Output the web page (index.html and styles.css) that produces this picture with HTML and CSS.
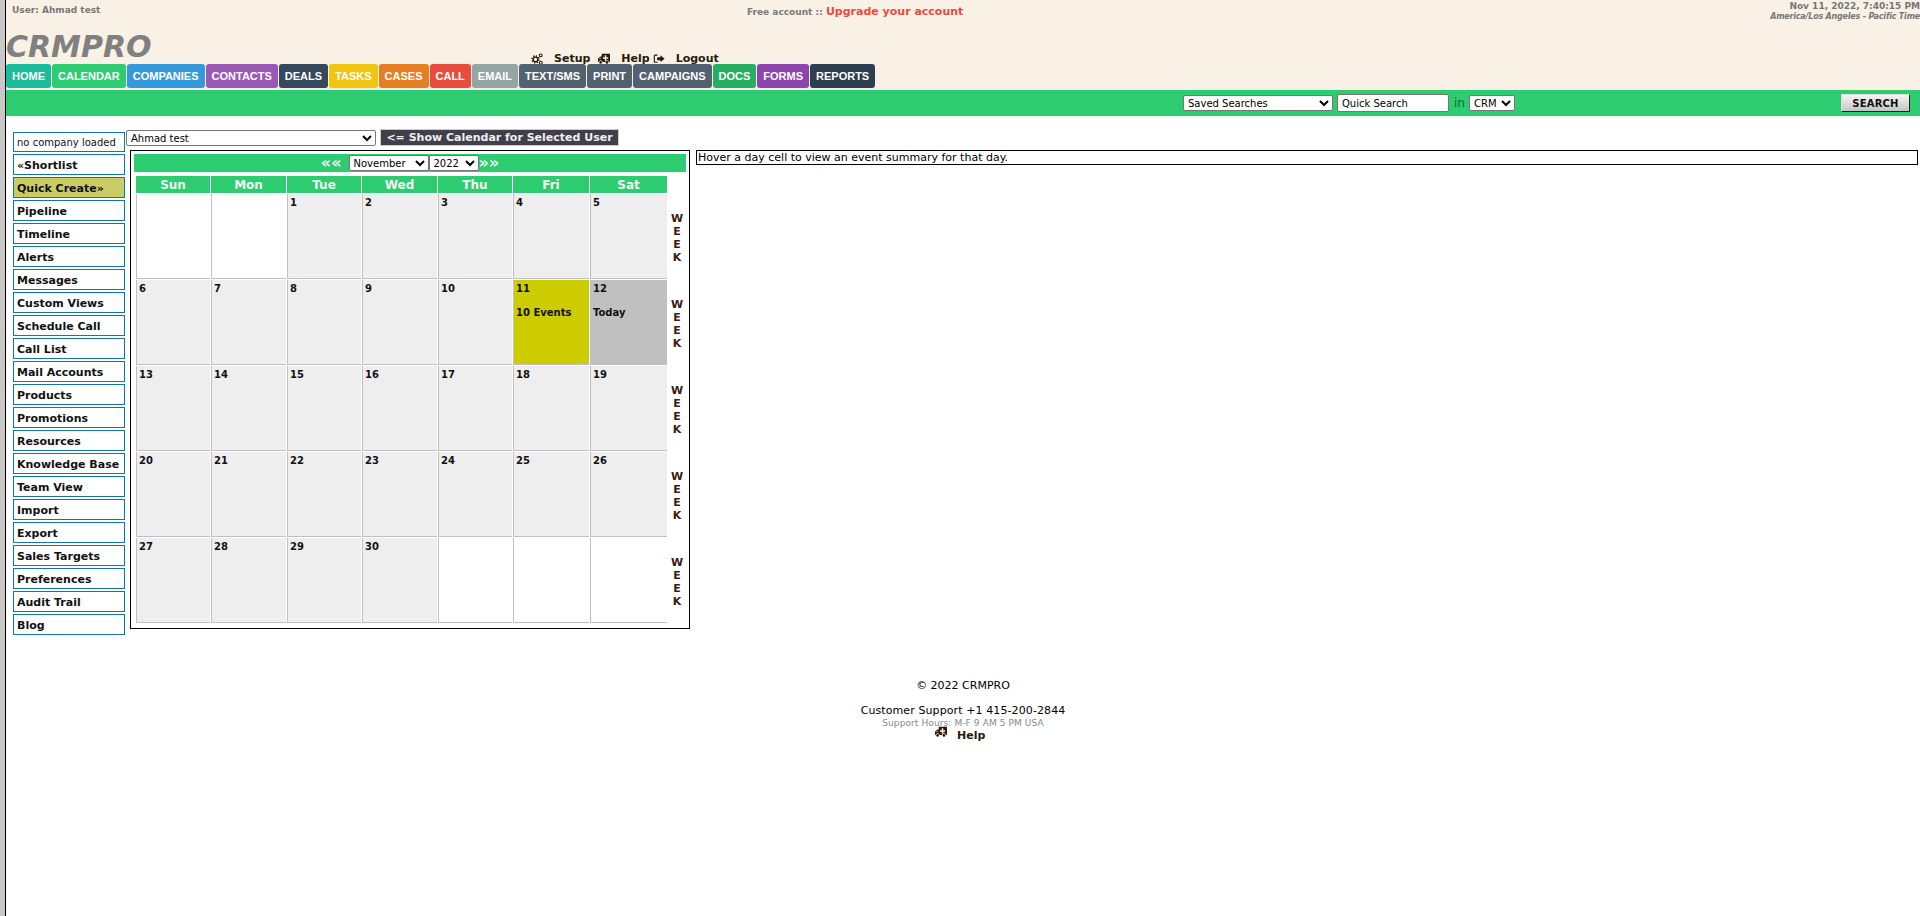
FILE: index.html
```html
<!DOCTYPE html>
<html>
<head>
    <title>CRMPRO</title>
    <link rel="stylesheet" href="styles.css">
</head>
<body>
    <div class="page">
        <!-- Top header -->
        <div class="header">
            <div class="header-top">
                <div class="user-name">User: Ahmad test</div>
                <div class="account">Free account :: <a class="upgrade">Upgrade your account</a></div>
                <div class="clock">
                    <div class="clock-time">Nov 11, 2022, 7:40:15 PM</div>
                    <div class="clock-zone">America/Los Angeles - Pacific Time</div>
                </div>
            </div>
            <div class="logo-row">
                <div class="logo">CRMPRO</div>
                <div class="top-links">
                    <svg class="icon" viewBox="0 0 16 16">
                        <g fill="none" stroke="#2b1a0a">
                            <circle cx="6" cy="8.500" r="4.600" stroke-width="2" stroke-dasharray="1.800 1.810"/>
                            <circle cx="6" cy="8.500" r="3" stroke-width="1.600"/>
                            <circle cx="13" cy="3.200" r="1.900" stroke-width="1.400"/>
                            <circle cx="13" cy="13" r="1.900" stroke-width="1.400"/>
                        </g>
                    </svg>
                    <a class="top-link setup-link">Setup</a>
                    <svg class="icon" viewBox="0 0 16 16"><path d="M5 1h11v11h-1.500a2.500 2.500 0 0 0-5 0H6a2.500 2.500 0 0 0-5 0H0V7.500L3 4.500h2zM9 3v2.500H6.500v2H9V10h2V7.500h2.500v-2H11V3zM3.500 6 1.500 8h2z" fill-rule="evenodd"/><circle cx="3.500" cy="12.500" r="1.800"/><circle cx="12" cy="12.500" r="1.800"/></svg>
                    <a class="top-link help-link">Help</a>
                    <svg class="icon" viewBox="0 0 16 16"><path d="M6 2H2.500A1.500 1.500 0 0 0 1 3.500v8A1.500 1.500 0 0 0 2.500 13H6v-1.500H2.500v-8H6zM10 3l5.500 4.500L10 12V9.500H5.500v-4H10z"/></svg>
                    <a class="top-link">Logout</a>
                </div>
            </div>
            <div class="nav">
                <a class="nav-item home">HOME</a>
                <a class="nav-item calendar">CALENDAR</a>
                <a class="nav-item companies">COMPANIES</a>
                <a class="nav-item contacts">CONTACTS</a>
                <a class="nav-item deals">DEALS</a>
                <a class="nav-item tasks">TASKS</a>
                <a class="nav-item cases">CASES</a>
                <a class="nav-item call">CALL</a>
                <a class="nav-item email">EMAIL</a>
                <a class="nav-item slate">TEXT/SMS</a>
                <a class="nav-item slate">PRINT</a>
                <a class="nav-item slate">CAMPAIGNS</a>
                <a class="nav-item docs">DOCS</a>
                <a class="nav-item forms">FORMS</a>
                <a class="nav-item reports">REPORTS</a>
            </div>
        </div>

        <!-- Search bar -->
        <div class="search-bar">
            <select class="saved-searches"><option>Saved Searches</option></select>
            <input class="quick-search" type="text" value="Quick Search">
            <span class="search-in">in</span>
            <select class="search-scope"><option>CRM</option></select>
            <button class="search-button">SEARCH</button>
        </div>

        <div class="content">
            <!-- Left menu -->
            <div class="sidebar">
                <div class="side-item no-company">no company loaded</div>
                <a class="side-item">«Shortlist</a>
                <a class="side-item quick-create">Quick Create»</a>
                <a class="side-item">Pipeline</a>
                <a class="side-item">Timeline</a>
                <a class="side-item">Alerts</a>
                <a class="side-item">Messages</a>
                <a class="side-item">Custom Views</a>
                <a class="side-item">Schedule Call</a>
                <a class="side-item">Call List</a>
                <a class="side-item">Mail Accounts</a>
                <a class="side-item">Products</a>
                <a class="side-item">Promotions</a>
                <a class="side-item">Resources</a>
                <a class="side-item">Knowledge Base</a>
                <a class="side-item">Team View</a>
                <a class="side-item">Import</a>
                <a class="side-item">Export</a>
                <a class="side-item">Sales Targets</a>
                <a class="side-item">Preferences</a>
                <a class="side-item">Audit Trail</a>
                <a class="side-item">Blog</a>
            </div>

            <div class="main">
                <div class="user-row">
                    <select class="user-select"><option>Ahmad test</option></select>
                    <button class="show-calendar">&lt;= Show Calendar for Selected User</button>
                </div>
                <div class="calendar-row">
                    <div class="calendar-box">
                        <div class="month-bar">
                            <span class="month-arrow prev">««</span>
                            <select class="month-select"><option>November</option></select>
                            <select class="year-select"><option>2022</option></select>
                            <span class="month-arrow">»»</span>
                        </div>
                        <table class="cal">
                            <tr>
                                <th>Sun</th><th>Mon</th><th>Tue</th><th>Wed</th><th>Thu</th><th>Fri</th><th>Sat</th>
                                <td class="week-head"></td>
                            </tr>
                            <tr>
                                <td class="blank"></td>
                                <td class="blank"></td>
                                <td>1</td><td>2</td><td>3</td><td>4</td><td>5</td>
                                <td class="week">W<br>E<br>E<br>K</td>
                            </tr>
                            <tr>
                                <td>6</td><td>7</td><td>8</td><td>9</td><td>10</td>
                                <td class="events">11<div class="cell-note">10 Events</div></td>
                                <td class="today">12<div class="cell-note">Today</div></td>
                                <td class="week">W<br>E<br>E<br>K</td>
                            </tr>
                            <tr>
                                <td>13</td><td>14</td><td>15</td><td>16</td><td>17</td><td>18</td><td>19</td>
                                <td class="week">W<br>E<br>E<br>K</td>
                            </tr>
                            <tr>
                                <td>20</td><td>21</td><td>22</td><td>23</td><td>24</td><td>25</td><td>26</td>
                                <td class="week">W<br>E<br>E<br>K</td>
                            </tr>
                            <tr>
                                <td>27</td><td>28</td><td>29</td><td>30</td>
                                <td class="blank"></td>
                                <td class="blank"></td>
                                <td class="blank"></td>
                                <td class="week">W<br>E<br>E<br>K</td>
                            </tr>
                        </table>
                    </div>
                    <div class="summary">Hover a day cell to view an event summary for that day.</div>
                </div>
            </div>
        </div>

        <!-- Footer -->
        <div class="footer">
            <div class="copyright">© 2022 CRMPRO</div>
            <div class="support">Customer Support +1 415-200-2844</div>
            <div class="hours">Support Hours: M-F 9 AM 5 PM USA</div>
            <div class="footer-help">
                <svg class="icon" viewBox="0 0 16 16"><path d="M5 1h11v11h-1.500a2.500 2.500 0 0 0-5 0H6a2.500 2.500 0 0 0-5 0H0V7.500L3 4.500h2zM9 3v2.500H6.500v2H9V10h2V7.500h2.500v-2H11V3zM3.500 6 1.500 8h2z" fill-rule="evenodd"/><circle cx="3.500" cy="12.500" r="1.800"/><circle cx="12" cy="12.500" r="1.800"/></svg>
                <a class="top-link">Help</a>
            </div>
        </div>
    </div>
</body>
</html>
```

FILE: styles.css
```css
/* Page frame: grey strip and black line down the left side */
html, body {
    margin: 0;
    height: 100%;
}
body {
    background-color: #c8c8c8;
    padding-left: 5px;
    font-family: "DejaVu Sans", Verdana, sans-serif;
    font-size: 11px;
    color: #000;
    overflow: hidden;
}
.page {
    background-color: #fff;
    border-left: 1px solid #000;
    height: 100%;
}

/* Header */
.header {
    background-color: #f9f1e6;
    height: 90px;
    display: flex;
    flex-direction: column;
}
.header-top {
    display: flex;
    height: 31px;
}
.user-name {
    width: 741px;
    box-sizing: border-box;
    padding: 5px 0 0 6px;
    font-size: 9px;
    font-weight: bold;
    color: #777;
}
.account {
    padding-top: 5px;
    font-size: 9px;
    font-weight: bold;
    color: #777;
}
.upgrade {
    font-size: 11px;
    color: #e74c3c;
}
.clock {
    margin-left: auto;
    padding-top: 1px;
    text-align: right;
    color: #777;
    font-weight: bold;
}
.clock-time {
    font-size: 9px;
}
.clock-zone {
    margin-top: 1px;
    font-size: 8px;
    font-style: italic;
    letter-spacing: -0.2px;
}
.logo-row {
    display: flex;
    height: 33px;
}
.logo {
    width: 525px;
    padding-top: 1px;
    font-size: 30px;
    font-weight: bold;
    font-style: italic;
    line-height: 30px;
    color: #808080;
}
.top-links {
    display: flex;
    align-items: flex-end;
    height: 35px;
}
.top-link {
    font-weight: bold;
    color: #2b1a0a;
    margin: 0 9px 0 11px;
    line-height: 14px;
}
.top-links .setup-link {
    margin-right: 8px;
}
.top-links .help-link {
    margin-right: 3px;
}
.icon {
    width: 12px;
    height: 12px;
    fill: #2b1a0a;
    margin-bottom: 1px;
}

/* Coloured tabs */
.nav {
    display: flex;
    gap: 1px;
}
.nav-item {
    height: 24px;
    line-height: 24px;
    padding: 0 6px;
    border-radius: 3px;
    font-family: "Liberation Sans", Arial, sans-serif;
    font-size: 11px;
    font-weight: bold;
    color: #fff;
}
.home { background-color: #1abc9c; }
.calendar { background-color: #2ecc71; }
.companies { background-color: #3498db; }
.contacts { background-color: #9b59b6; }
.deals { background-color: #34495e; }
.tasks { background-color: #f1c40f; }
.cases { background-color: #e67e22; }
.call { background-color: #e74c3c; }
.email { background-color: #95a5a6; }
.slate { background-color: #536270; }
.docs { background-color: #27ae60; }
.forms { background-color: #8e44ad; }
.reports { background-color: #2c3e50; }

/* Search bar */
.search-bar {
    background-color: #2ecc71;
    height: 26px;
    display: flex;
    align-items: center;
    padding-left: 1177px;
}
.search-bar select, .search-bar input {
    font-family: "DejaVu Sans", Verdana, sans-serif;
    font-size: 10px;
    box-sizing: border-box;
    background-color: #fff;
    border: 1px solid #767676;
    border-radius: 2px;
    height: 16px;
    padding: 0;
}
.saved-searches {
    width: 150px;
}
.search-bar .quick-search {
    width: 112px;
    height: 18px;
    margin-left: 4px;
    padding-left: 4px;
}
.search-in {
    margin: 0 4px 0 5px;
    font-size: 12px;
    color: #14642f;
}
.search-scope {
    width: 46px;
}
.search-button {
    width: 69px;
    height: 18px;
    margin-left: auto;
    margin-right: 10px;
    padding: 0;
    border: 1px solid #ddd;
    border-right-color: #222;
    border-bottom-color: #222;
    background: linear-gradient(#f5f5f5, #c4c4c4);
    font-family: "DejaVu Sans", Verdana, sans-serif;
    font-size: 10px;
    font-weight: bold;
    letter-spacing: 0.2px;
    color: #111;
}

/* Main area */
.content {
    display: flex;
    padding: 13px 0 0 7px;
}
.sidebar {
    width: 112px;
    display: flex;
    flex-direction: column;
    gap: 2px;
    padding-top: 3px;
}
.side-item {
    height: 21px;
    line-height: 19px;
    box-sizing: border-box;
    border: 1px solid #0e76a8;
    padding: 1px 0 0 3px;
    font-weight: bold;
    color: #111;
    white-space: nowrap;
}
.no-company {
    height: 20px;
    padding-top: 0;
    font-weight: normal;
    font-size: 10px;
}
.quick-create {
    background-color: #cccc66;
}
.main {
    flex: 1;
    padding-left: 1px;
    min-width: 0;
}
.user-row {
    display: flex;
    align-items: flex-end;
    height: 17px;
}
.user-select {
    width: 250px;
    height: 16px;
    box-sizing: border-box;
    padding: 0;
    font-family: "DejaVu Sans", Verdana, sans-serif;
    font-size: 10px;
    background-color: #fff;
    border: 1px solid #767676;
    border-radius: 2px;
}
.show-calendar {
    height: 17px;
    width: 239px;
    margin-left: 4px;
    padding: 0;
    border: 1px solid #ccc;
    background-color: #423f4d;
    color: #eee;
    font-family: "DejaVu Sans", Verdana, sans-serif;
    font-size: 11px;
    font-weight: bold;
    white-space: nowrap;
}
.calendar-row {
    display: flex;
    gap: 6px;
    margin-top: 4px;
    padding-left: 4px;
}

/* Calendar */
.calendar-box {
    width: 560px;
    height: 479px;
    box-sizing: border-box;
    border: 1px solid #000;
    padding: 3px;
    flex-shrink: 0;
}
.month-bar {
    background-color: #2ecc71;
    height: 18px;
    display: flex;
    align-items: center;
    justify-content: center;
    color: #eee;
    font-weight: bold;
}
.month-arrow {
    font-size: 16px;
    line-height: 16px;
}
.month-arrow.prev {
    margin-right: 7px;
}
.month-bar select {
    height: 16px;
    box-sizing: border-box;
    padding: 0;
    font-family: "DejaVu Sans", Verdana, sans-serif;
    font-size: 10px;
    background-color: #fff;
    border: 1px solid #767676;
    border-radius: 2px;
}
.month-select {
    width: 80px;
}
.year-select {
    width: 50px;
}
.cal {
    border-collapse: separate;
    border-spacing: 1px;
    table-layout: fixed;
    width: 552px;
    margin: 3px 0 0 1px;
}
.cal th {
    background-color: #2ecc71;
    color: #f4f4f4;
    height: 17px;
    padding: 0;
    font-size: 12px;
}
.cal th:nth-child(1), .cal th:nth-child(3), .cal th:nth-child(5) {
    width: 74px;
}
.cal th:nth-child(2), .cal th:nth-child(4) {
    width: 75px;
}
.cal th:nth-child(6) {
    width: 76px;
}
.cal th:nth-child(7) {
    width: 77px;
}
.cal td {
    height: 79px;
    padding: 3px 2px 2px 2px;
    vertical-align: top;
    background-color: #eee;
    border-left: 1px solid #c0c0c0;
    border-bottom: 1px solid #c0c0c0;
    font-weight: bold;
    font-size: 10px;
    color: #111;
}
.cal td.blank {
    background-color: #fff;
}
.cal td.events {
    background-color: #cccc00;
}
.cal td.today {
    background-color: #c0c0c0;
}
.cell-note {
    margin-top: 13px;
}
.cal td.week, .cal td.week-head {
    background-color: #fff;
    border: none;
    width: 18px;
    padding: 2px 1px 0 0;
    text-align: center;
    vertical-align: middle;
    font-size: 11px;
    line-height: 13px;
    color: #3a2010;
}
.cal td.week-head {
    height: 15px;
}
.summary {
    flex: 1;
    height: 15px;
    line-height: 13px;
    box-sizing: border-box;
    border: 1px solid #000;
    margin-right: 2px;
    padding-left: 1px;
}

/* Footer */
.footer {
    text-align: center;
    margin-top: 44px;
}
.copyright {
    margin-bottom: 12px;
}
.support {
    letter-spacing: 0.1px;
    margin-bottom: 1px;
}
.hours {
    font-size: 9px;
    letter-spacing: 0.1px;
    color: #888;
}
.footer-help {
    height: 15px;
    margin-top: -2px;
}
.footer-help .top-link {
    margin: 0 6px 0 7px;
}
```
